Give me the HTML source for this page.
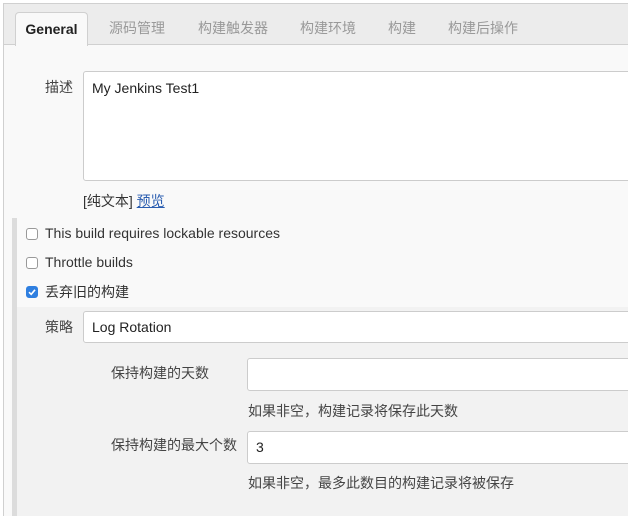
<!DOCTYPE html>
<html style="width:628px;height:516px;overflow:hidden"><head><meta charset="utf-8"><style>
*{box-sizing:border-box;margin:0;padding:0}
body{width:628px;height:516px;overflow:hidden;background:#fff;font-family:"Liberation Sans","Noto Sans CJK SC",sans-serif;font-size:14px;color:#333;position:relative}
.a{position:absolute}
.frame{left:3px;top:3px;width:630px;height:513px;border:1px solid #d0d0d0;border-bottom:none;background:#f9f9f9}
.tabbar{left:4px;top:4px;width:630px;height:41px;background:#ececec;border-bottom:1px solid #d0d0d0}
.tab{top:18px;color:#999;font-size:14px}
.gen{left:15px;top:12px;width:73px;height:34px;background:#f9f9f9;border:1px solid #d0d0d0;border-bottom:none;border-radius:4px 4px 0 0;font-weight:bold;font-size:14px;color:#222;text-align:center;line-height:32px}
.inp{background:#fff;border:1px solid #ccc;border-radius:3px;font-size:14px;color:#222;padding-left:8px}
.cb{width:12px;height:12px;border:1px solid #999;border-radius:3px;background:#fff}
.lbl{color:#444;font-size:14px}
</style></head><body>
<div class="a frame"></div>
<div class="a tabbar"></div>
<div class="a gen">General</div>
<div class="a tab" style="left:109px">源码管理</div>
<div class="a tab" style="left:198px">构建触发器</div>
<div class="a tab" style="left:300px">构建环境</div>
<div class="a tab" style="left:388px">构建</div>
<div class="a tab" style="left:448px">构建后操作</div>

<div class="a lbl" style="left:45px;top:77px">描述</div>
<div class="a inp" style="left:83px;top:71px;width:560px;height:110px;padding-top:8px">My Jenkins Test1</div>
<div class="a" style="left:83px;top:191px;color:#333">[纯文本] <span style="color:#2a5db0;text-decoration:underline">预览</span></div>

<div class="a" style="left:12px;top:218px;width:5px;height:298px;background:#dcdcdc"></div>
<div class="a" style="left:17px;top:307px;width:615px;height:209px;background:#f2f2f2"></div>

<div class="a cb" style="left:26px;top:228px"></div>
<div class="a" style="left:45px;top:225px;font-size:14px">This build requires lockable resources</div>
<div class="a cb" style="left:26px;top:257px"></div>
<div class="a" style="left:45px;top:254px;font-size:14px">Throttle builds</div>
<div class="a cb" style="left:26px;top:286px;background:#2f7fe0;border-color:#2f7fe0"><svg width="10" height="10" viewBox="0 0 10 10" style="position:absolute;left:0;top:0"><path d="M2 5.2L4.2 7.3 8 2.8" stroke="#fff" stroke-width="1.6" fill="none"/></svg></div>
<div class="a" style="left:45px;top:282px;font-size:14px">丢弃旧的构建</div>

<div class="a lbl" style="left:45px;top:317px">策略</div>
<div class="a inp" style="left:83px;top:311px;width:560px;height:32px;line-height:30px">Log Rotation</div>

<div class="a lbl" style="left:111px;top:363px">保持构建的天数</div>
<div class="a inp" style="left:247px;top:358px;width:400px;height:33px"></div>
<div class="a lbl" style="left:248px;top:401px">如果非空，构建记录将保存此天数</div>

<div class="a lbl" style="left:111px;top:435px">保持构建的最大个数</div>
<div class="a inp" style="left:247px;top:431px;width:400px;height:33px;line-height:31px">3</div>
<div class="a lbl" style="left:248px;top:473px">如果非空，最多此数目的构建记录将被保存</div>
</body></html>
